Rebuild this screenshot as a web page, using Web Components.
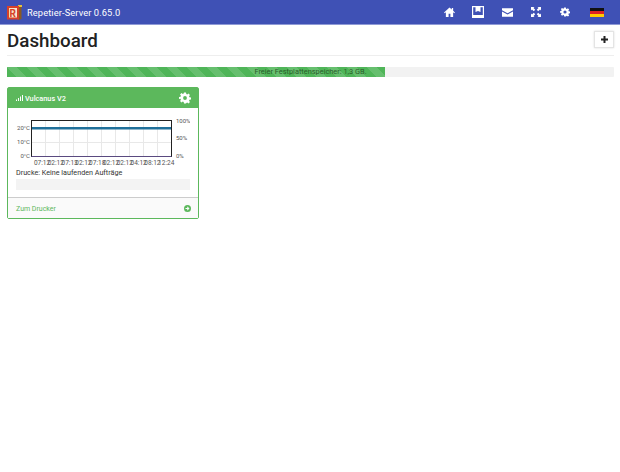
<!DOCTYPE html>
<html><head><meta charset="utf-8"><style>html,body{margin:0;background:#fff;font-family:Roboto,"Liberation Sans",sans-serif}</style></head>
<body>
<app-nav></app-nav>
<app-page>
  <page-head title="Dashboard"></page-head>
  <disk-bar>Freier Festplattenspeicher: 1,3 GB.</disk-bar>
  <printer-card name="Vulcanus V2"></printer-card>
</app-page>
<script>
function def(n,html){customElements.define(n,class extends HTMLElement{connectedCallback(){if(this.shadowRoot)return;const s=this.attachShadow({mode:'open'});s.innerHTML=typeof html==='function'?html(this):html;}});}
const gear='<path fill="currentColor" d="M12 8.2A3.8 3.8 0 1 0 12 15.8 3.8 3.8 0 0 0 12 8.200ZM10 1h4l.6 3.100 1.800.8 2.700-1.800 2.800 2.800-1.800 2.700.8 1.800 3.100.6v4l-3.100.6-.8 1.800 1.800 2.700-2.800 2.800-2.700-1.800-1.800.8L14 23h-4l-.6-3.100-1.800-.8-2.700 1.800-2.800-2.800 1.800-2.700-.8-1.800L0 14v-4l3.100-.6.8-1.800L2.100 4.900l2.800-2.800 2.700 1.800 1.800-.8z" fill-rule="evenodd"/>';
def('app-nav',`<style>:host{display:flex;align-items:center;height:24px;background:#3f51b5;border-bottom:1px solid #8f9ad6;color:#fff;font-size:9.300px;padding:0 5.500px 0 7px}
.logo{width:15px;height:15px;margin-right:5px;flex:none}.t{flex:1;letter-spacing:.1px}.i{display:flex;align-items:center;gap:0}
.i span{width:29px;display:flex;justify-content:center;align-items:center}svg{display:block}</style>
<svg class="logo" viewBox="0 0 15 15"><path fill="#8a5a22" d="M11 1h3.500v13l-3.500 1z"/><path fill="#e8c23a" d="M11 0h4v2h-4z"/><rect x="0" y="1" width="12" height="13.500" fill="#d7412a"/><rect x="2" y="3" width="8" height="9.500" fill="#f6e6c8"/><text x="2.500" y="11.500" font-size="10" font-weight="700" fill="#d7412a" font-family="Roboto">R</text></svg>
<div class="t">Repetier-Server 0.65.0</div><div class="i">
<span><svg width="11" height="10" viewBox="0 0 24 22"><path fill="#fff" d="M12 1 0 12l1.500 1.500L4 11.300V22h6v-7h4v7h6V11.300l2.500 2.200L24 12l-4-3.600V2h-3v3.700z"/></svg></span>
<span><svg width="12" height="12" viewBox="0 0 12 12"><path fill="none" stroke="#fff" stroke-width="1.200" d="M.6.6h10.800v10.800H.6z"/><path fill="#fff" d="M3.500 1h5v5l-2.500-1-2.500 1zM1 9h10v2.500H1z"/></svg></span>
<span><svg width="11" height="9" viewBox="0 0 22 17"><path fill="#fff" d="M0 0h22v4l-11 6L0 4zM0 6.500l11 6 11-6V17H0z"/></svg></span>
<span><svg width="10" height="10" viewBox="0 0 20 20"><path fill="#fff" d="M0 0h7L5 2l3.500 3.500-3 3L2 5 0 7zM20 0v7l-2-2-3.500 3.500-3-3L15 2l-2-2zM0 20v-7l2 2 3.500-3.500 3 3L5 18l2 2zM20 20h-7l2-2-3.500-3.500 3-3L18 15l2-2z"/></svg></span>
<span style="color:#fff"><svg width="10" height="10" viewBox="0 0 24 24">${gear}</svg></span>
<span style="width:35px"><svg width="14" height="9" viewBox="0 0 14 9"><rect width="14" height="3" fill="#111"/><rect y="3" width="14" height="3" fill="#d22"/><rect y="6" width="14" height="3" fill="#fc0"/></svg></span>
</div>`);
def('app-page',`<style>:host{display:block;padding:0 6px 0 7px}</style><slot></slot>`);
def('page-head',h=>`<style>:host{display:flex;justify-content:space-between;height:30px;border-bottom:1px solid #eee;color:#222;align-items:flex-start}
h1{margin:0;font:500 18.800px/32px Roboto,sans-serif}
button{all:unset;box-sizing:border-box;width:20px;height:17px;margin-top:6px;border:1px solid #e4e4e4;box-shadow:0 0 2px #ddd;display:flex;align-items:center;justify-content:center}
svg{display:block}</style><h1>${h.getAttribute('title')}</h1><button aria-label="Add"><svg width="7" height="7" viewBox="0 0 7 7"><path fill="#222" d="M2.500 0h2v2.500H7v2H4.500V7h-2V4.500H0v-2h2.500z"/></svg></button>`);
def('disk-bar',`<style>:host{display:block;position:relative;margin-top:11px;height:10px;background:#f2f2f2;border-radius:1px;font-size:7.400px;line-height:10px;color:#2c5c2c;text-align:center}
.f{position:absolute;left:0;top:0;width:62.300%;height:100%;background:#4fb558;background-image:linear-gradient(45deg,rgba(255,255,255,.13) 25%,transparent 25%,transparent 50%,rgba(255,255,255,.13) 50%,rgba(255,255,255,.13) 75%,transparent 75%);background-size:20px 20px}
.x{position:relative}</style>
<div class="f"></div><div class="x"><slot></slot></div>`);
const xs=[0,1,2,3,4,5,6,7,8,9];
const labels=['07:12','02:12','07:13','02:12','07:18','02:12','02:12','04:12','08:12','12:24'];
def('printer-card',h=>`<style>:host{display:block;width:190px;margin-top:10px;border:1px solid #5cb85c;border-radius:2px;font-size:7.200px;color:#333}
.h{display:flex;align-items:center;justify-content:space-between;height:20px;background:#5cb85c;color:#fff;padding:0 7px 0 8px;font-size:7.300px;font-weight:500}
.n{display:flex;align-items:center;gap:2px}
.b{padding:8px 8px 7px 8px}
svg{display:block}svg text{font-family:Roboto,sans-serif}
.lab{font-size:7.200px;color:#333;line-height:12px}
.bar{height:11px;background:#f3f3f3}
.f{display:flex;align-items:center;justify-content:space-between;height:21px;border-top:1px solid #ccc;background:#fafafa;color:#5cb85c;padding:1px 7px 0 8px;font-size:7px;box-sizing:border-box}</style>
<div class="h"><span class="n"><svg width="7" height="6" viewBox="0 0 7 6"><path fill="#fff" d="M0 4.500h1V6H0zM2 3h1v3H2zM4 1.500h1V6H4zM6 0h1v6H6z"/></svg>${h.getAttribute('name')}</span><svg width="12" height="12" viewBox="0 0 24 24" style="color:#fff">${gear}</svg></div>
<div class="b"><svg width="174" height="51" viewBox="0 -3 174 51">
<g stroke="#e8e8e8" stroke-width="1">${xs.map(i=>`<line x1="${15.500+14*(i+1)}" x2="${15.500+14*(i+1)}" y1="1" y2="37"/>`).join('')}<line x1="15" x2="156" y1="23.500" y2="23.500"/></g>
<rect x="15.500" y="1.500" width="140" height="36" fill="none" stroke="#222"/>
<line x1="15.500" x2="155.500" y1="37.500" y2="37.500" stroke="#5a4a80"/>
<rect x="16" y="8" width="139" height="2.500" fill="#20709a"/>
<g font-size="6" fill="#555" text-anchor="end"><text x="14" y="11">20°C</text><text x="14" y="25">10°C</text><text x="14" y="39">0°C</text></g>
<g font-size="6" fill="#555"><text x="160" y="3.500">100%</text><text x="160" y="21">50%</text><text x="160" y="39">0%</text></g>
<g font-size="6.500" fill="#555" text-anchor="middle">${labels.map((l,i)=>`<text x="${26+i*13.800}" y="45.500">${l}</text>`).join('')}</g>
</svg>
<div class="lab">Drucke: Keine laufenden Aufträge</div><div class="bar"></div></div>
<div class="f"><span>Zum Drucker</span><svg width="7" height="7" viewBox="0 0 14 14"><path fill="#5cb85c" fill-rule="evenodd" d="M7 0a7 7 0 1 0 0 14A7 7 0 0 0 7 0zM7 3l4 4-4 4-1.300-1.300L7.500 8H3V6h4.500L5.700 4.300z"/></svg></div>`);
</script>
</body></html>
